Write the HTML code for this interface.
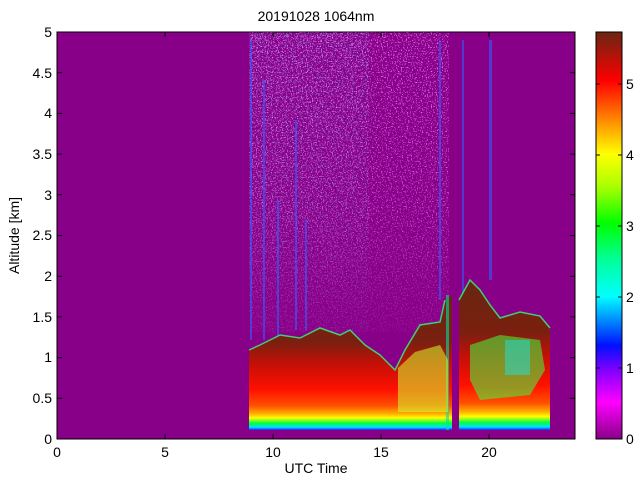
<!DOCTYPE html>
<html><head><style>
body{margin:0;background:#fff;width:640px;height:480px;overflow:hidden;font-family:"Liberation Sans",sans-serif}
</style></head><body>
<svg width="640" height="480" xmlns="http://www.w3.org/2000/svg" font-family="Liberation Sans, sans-serif" font-size="14">
<defs>
<linearGradient id="cb" x1="0" y1="1" x2="0" y2="0">
<stop offset="0" stop-color="#880088"/>
<stop offset="0.09" stop-color="#ff00ff"/>
<stop offset="0.17" stop-color="#8000ff"/>
<stop offset="0.23" stop-color="#0010ff"/>
<stop offset="0.35" stop-color="#00ffff"/>
<stop offset="0.44" stop-color="#00ff99"/>
<stop offset="0.53" stop-color="#00ff00"/>
<stop offset="0.62" stop-color="#aaff00"/>
<stop offset="0.70" stop-color="#ffff00"/>
<stop offset="0.79" stop-color="#ff8000"/>
<stop offset="0.88" stop-color="#ff0000"/>
<stop offset="1" stop-color="#6a2512"/>
</linearGradient>
<linearGradient id="low" x1="0" y1="0" x2="0" y2="1">
<stop offset="0" stop-color="#6a2512"/>
<stop offset="0.35" stop-color="#7a2010"/>
<stop offset="0.5" stop-color="#c01008"/>
<stop offset="0.7" stop-color="#ff1000"/>
<stop offset="0.82" stop-color="#ff5000"/>
<stop offset="0.88" stop-color="#ffb000"/>
<stop offset="0.91" stop-color="#ffff00"/>
<stop offset="0.95" stop-color="#00ff40"/>
<stop offset="0.98" stop-color="#00e0ff"/>
<stop offset="1" stop-color="#2020ff"/>
</linearGradient>
<linearGradient id="nm" x1="0" y1="0" x2="0" y2="1">
<stop offset="0" stop-color="#fff" stop-opacity="1"/>
<stop offset="0.6" stop-color="#fff" stop-opacity="0.7"/>
<stop offset="1" stop-color="#fff" stop-opacity="0.2"/>
</linearGradient>
<filter id="spk1" x="0" y="0" width="1" height="1"><feTurbulence type="fractalNoise" baseFrequency="0.8" numOctaves="1" seed="3"/><feColorMatrix type="matrix" values="0 0 0 0 0.2  0 0 0 0 0.5  0 0 0 0 1  0 0 0 7 -4.2"/><feComposite in2="SourceGraphic" operator="in"/></filter>
<filter id="spk2" x="0" y="0" width="1" height="1"><feTurbulence type="fractalNoise" baseFrequency="0.8" numOctaves="1" seed="9"/><feColorMatrix type="matrix" values="0 0 0 0 0.85  0 0 0 0 0.2  0 0 0 0 1  0 0 0 7 -3.9"/><feComposite in2="SourceGraphic" operator="in"/></filter>
<filter id="spk3" x="0" y="0" width="1" height="1"><feTurbulence type="fractalNoise" baseFrequency="0.8" numOctaves="1" seed="17"/><feColorMatrix type="matrix" values="0 0 0 0 0.2  0 0 0 0 1  0 0 0 0 1  0 0 0 7 -4.6"/><feComposite in2="SourceGraphic" operator="in"/></filter>
</defs>
<rect x="57" y="32" width="518" height="407" fill="#880088"/>
<!-- noise region -->
<rect x="249" y="32" width="120" height="300" fill="url(#nm)" filter="url(#spk1)"/>
<rect x="249" y="32" width="200" height="300" fill="url(#nm)" filter="url(#spk2)"/>
<rect x="249" y="32" width="120" height="250" fill="url(#nm)" filter="url(#spk3)"/>
<!-- streaks -->
<g fill="#3060ff" opacity="0.6">
<rect x="250" y="40" width="2" height="300"/><rect x="263" y="80" width="2" height="260"/>
<rect x="277" y="200" width="2" height="140"/><rect x="295" y="120" width="2" height="210"/>
<rect x="305" y="220" width="2" height="110"/><rect x="439" y="40" width="2" height="260"/>
<rect x="462" y="40" width="2" height="260"/><rect x="489" y="40" width="3" height="240"/>
</g>
<!-- cloud -->
<polygon fill="url(#low)" points="249,350 260,345 280,335 300,338 320,328 340,335 350,330 365,345 380,355 390,365 395,370 405,350 420,325 440,322 445,300 452,295 452,430 249,430"/>
<polygon fill="url(#low)" points="459,300 470,280 480,290 490,305 500,318 520,312 540,316 550,328 550,430 459,430"/>
<rect x="452" y="295" width="7" height="135" fill="#880088"/>
<rect x="446" y="295" width="3" height="135" fill="#00e0a0" opacity="0.6"/>
<!-- green/yellow patches -->
<polygon fill="#d0ff30" opacity="0.55" points="398,368 415,352 440,345 448,360 448,412 398,412"/>
<polygon fill="#40ff40" opacity="0.55" points="470,345 500,335 540,340 545,370 530,395 480,400 470,380"/>
<rect x="505" y="340" width="25" height="35" fill="#20e0e0" opacity="0.5"/>
<!-- cloud tops fringe -->
<polyline fill="none" stroke="#30ff80" stroke-width="1.5" opacity="0.8" points="249,350 260,345 280,335 300,338 320,328 340,335 350,330 365,345 380,355 390,365 395,370 405,350 420,325 440,322 445,300"/>
<polyline fill="none" stroke="#30ff80" stroke-width="1.5" opacity="0.8" points="459,300 470,280 480,290 490,305 500,318 520,312 540,316 550,328"/>
<!-- axes -->
<rect x="57" y="32" width="518" height="407" fill="none" stroke="#000" stroke-width="1"/>
<g stroke="#000" stroke-width="1">
<path d="M165,439v-5M273,439v-5M381,439v-5M489,439v-5M165,32v5M273,32v5M381,32v5M489,32v5"/>
<path d="M57,398.3h5M57,357.6h5M57,316.9h5M57,276.2h5M57,235.5h5M57,194.8h5M57,154.1h5M57,113.4h5M57,72.7h5"/>
<path d="M575,398.3h-5M575,357.6h-5M575,316.9h-5M575,276.2h-5M575,235.5h-5M575,194.8h-5M575,154.1h-5M575,113.4h-5M575,72.7h-5"/>
</g>
<g text-anchor="middle" font-size="14">
<text x="57" y="457">0</text><text x="165" y="457">5</text><text x="273" y="457">10</text><text x="381" y="457">15</text><text x="489" y="457">20</text>
<text x="316" y="473">UTC Time</text>
<text x="316" y="21">20191028 1064nm</text>
</g>
<g text-anchor="end" font-size="14">
<text x="52" y="444">0</text><text x="52" y="403">0.5</text><text x="52" y="362">1</text><text x="52" y="322">1.5</text><text x="52" y="281">2</text><text x="52" y="240">2.5</text><text x="52" y="200">3</text><text x="52" y="159">3.5</text><text x="52" y="118">4</text><text x="52" y="78">4.5</text><text x="52" y="37">5</text>
</g>
<text transform="translate(19,235.5) rotate(-90)" text-anchor="middle" font-size="14">Altitude [km]</text>
<!-- colorbar -->
<rect x="596" y="32" width="26" height="407" fill="url(#cb)" stroke="#000" stroke-width="1"/>
<g stroke="#000"><path d="M622,368h-4M622,297h-4M622,226h-4M622,155h-4M622,84h-4M596,368h4M596,297h4M596,226h4M596,155h4M596,84h4"/></g>
<g font-size="14"><text x="626" y="444">0</text><text x="626" y="373">1</text><text x="626" y="302">2</text><text x="626" y="231">3</text><text x="626" y="160">4</text><text x="626" y="89">5</text></g>
</svg>
</body></html>
